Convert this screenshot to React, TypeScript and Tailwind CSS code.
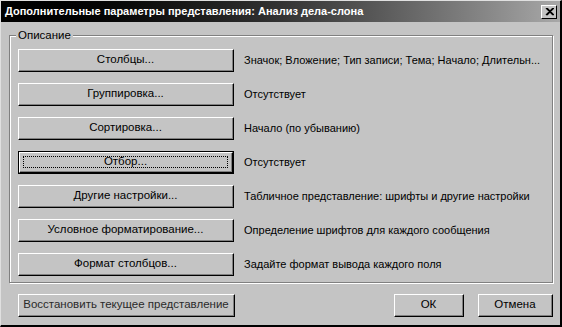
import React from "react";

const rows: { label: string; desc: string; focused?: boolean }[] = [
  { label: "Столбцы...", desc: "Значок; Вложение; Тип записи; Тема; Начало; Длительн..." },
  { label: "Группировка...", desc: "Отсутствует" },
  { label: "Сортировка...", desc: "Начало (по убыванию)" },
  { label: "Отбор...", desc: "Отсутствует", focused: true },
  { label: "Другие настройки...", desc: "Табличное представление: шрифты и другие настройки" },
  { label: "Условное форматирование...", desc: "Определение шрифтов для каждого сообщения" },
  { label: "Формат столбцов...", desc: "Задайте формат вывода каждого поля" },
];

function Btn({
  children,
  w,
  focused,
  dim,
}: {
  children: React.ReactNode;
  w: string;
  focused?: boolean;
  dim?: boolean;
}) {
  return (
    <div className={`${w} h-[23px] shrink-0 ${focused ? "border border-black" : ""}`}>
      <div className="w-full h-full border-t border-l border-t-white border-l-white border-r border-b border-r-black border-b-black">
        <div className="w-full h-full border-r border-b border-r-[#808080] border-b-[#808080] bg-[#c4c4c4] flex items-center justify-center relative">
          {focused && <div className="absolute inset-[3px] border border-dotted border-black" />}
          <span
            className={`text-[11.5px] leading-none whitespace-nowrap ${dim ? "text-[#2a2a2a]" : "text-black"}`}
          >
            {children}
          </span>
        </div>
      </div>
    </div>
  );
}

export default function App() {
  return (
    <div
      className="w-[562px] h-[327px] bg-[#c4c4c4] border-t border-l border-t-[#e0e0e0] border-l-[#e0e0e0] border-r-2 border-b-2 border-r-black border-b-black flex flex-col overflow-hidden"
      style={{ fontFamily: "'Liberation Sans', Arial, sans-serif" }}
    >
      {/* Title bar */}
      <div className="h-[21px] shrink-0 flex items-center justify-between pl-[4px] pr-[3px] bg-gradient-to-r from-black via-[#333333] to-[#a8a8a8]">
        <span className="text-white font-bold text-[11px] leading-none">
          Дополнительные параметры представления: Анализ дела-слона
        </span>
        <div className="w-[16px] h-[14px] border-t border-l border-t-white border-l-white border-r border-b border-r-black border-b-black bg-[#c4c4c4] flex items-center justify-center">
          <svg width="9" height="8" viewBox="0 0 9 8">
            <path d="M1 0 L8 7 M8 0 L1 7 M2 0 L9 7 M9 0 L2 7" stroke="black" strokeWidth="1.2" />
          </svg>
        </div>
      </div>

      {/* Body */}
      <div className="flex-1 flex flex-col pl-[8px] pr-[8px] pt-[13px]">
        {/* Group box */}
        <div className="relative w-[544px] h-[248px] border border-[#808080] shadow-[inset_1px_1px_0_#ffffff,1px_1px_0_#ffffff]">
          <span className="absolute -top-[8px] left-[6px] px-[2px] bg-[#c4c4c4] text-[11.5px] leading-[14px] text-black">
            Описание
          </span>
          <div className="flex flex-col gap-[11px] pl-[8px] pt-[13px]">
            {rows.map((r) => (
              <div key={r.label} className="flex items-center gap-[10px]">
                <Btn w="w-[216px]" focused={r.focused}>
                  {r.label}
                </Btn>
                <span className="text-[11px] leading-none text-black whitespace-nowrap">{r.desc}</span>
              </div>
            ))}
          </div>
        </div>

        {/* Bottom buttons */}
        <div className="flex items-center mt-[11px] pl-[9px]">
          <Btn w="w-[217px]" dim>
            Восстановить текущее представление
          </Btn>
          <div className="ml-[159px]">
            <Btn w="w-[70px]">ОК</Btn>
          </div>
          <div className="ml-[14px]">
            <Btn w="w-[75px]">Отмена</Btn>
          </div>
        </div>
      </div>
    </div>
  );
}
